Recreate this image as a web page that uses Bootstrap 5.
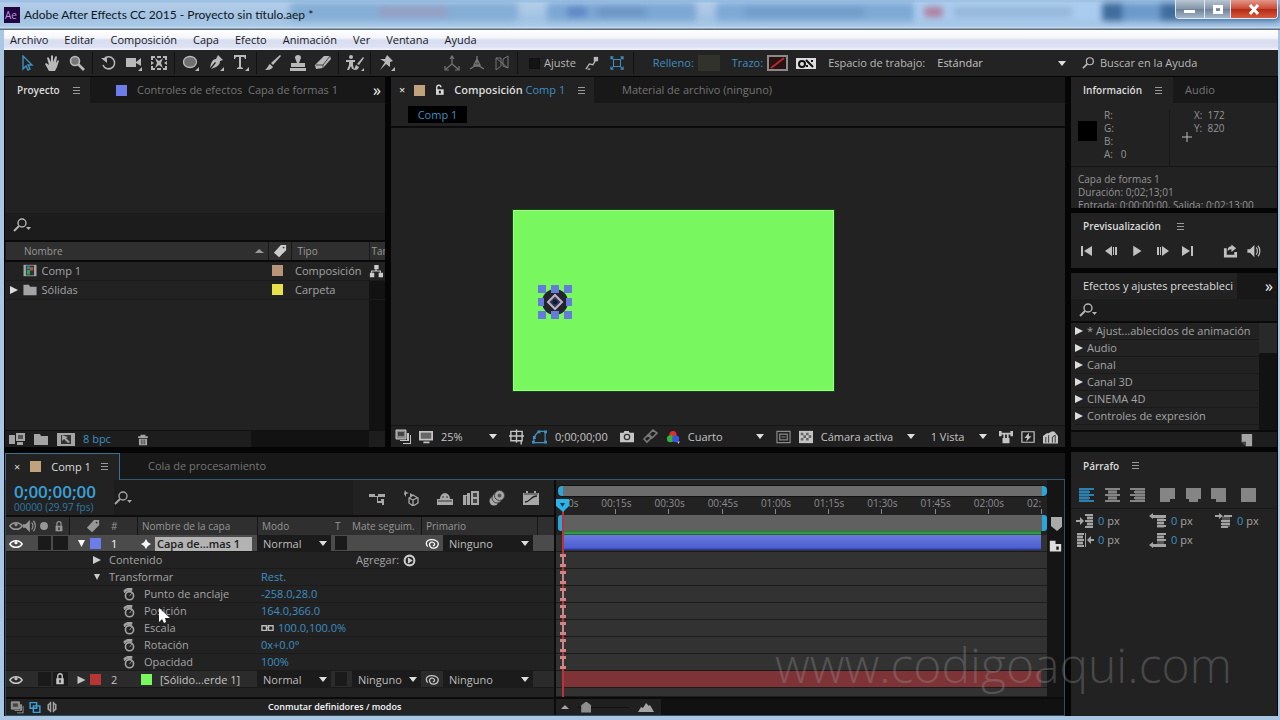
<!DOCTYPE html>
<html lang="es">
<head>
<meta charset="utf-8">
<meta name="viewport" content="width=device-width, initial-scale=1">
<title>Adobe After Effects CC 2015 - Proyecto sin título.aep *</title>
<link href="https://cdn.jsdelivr.net/npm/bootstrap@5.3.0/dist/css/bootstrap.min.css" rel="stylesheet">
<script src="https://cdn.jsdelivr.net/npm/bootstrap@5.3.0/dist/js/bootstrap.bundle.min.js"></script>
<style>
:root{--panel:#222223;--dark:#181818;--txt:#a4a4a4;--hi:#dcdcdc;--blue:#3f8fc0;--gap:6px}
*{min-width:0}
body{font-family:"Open Sans","Noto Sans",sans-serif;font-size:11px;line-height:14px;color:var(--txt);background:#a9c6e3;overflow:hidden}
button,select,input{font:inherit;color:inherit;background:none;border:0;padding:0;border-radius:0}
svg{display:block;width:16px;height:16px;fill:currentColor;flex:none}
a{color:var(--blue);text-decoration:none}
.window{min-height:100vh;padding:0 2px 4px 4px}
.titlebar{height:30px;color:#101820;font-family:Lato,sans-serif;font-size:12px;position:relative;overflow:hidden;margin:0 -2px 0 -4px;padding-left:4px;background:linear-gradient(#9cc1e4 0 2px,#b4cde8 3px,#a2c2e3 18px,#a9c9e8 26px,#c8dcf0 28px,#5d6d7c 29px)}
.glass{position:absolute;inset:3px 0 9px 290px;filter:blur(3px);overflow:visible}
.glass span{position:absolute;border-radius:3px;top:0;bottom:0}
.glass .blot{top:4px;bottom:4px;opacity:.5}
.title-text{position:relative}
.caps{position:absolute;right:2px;top:0;height:19px;border:1px solid #dfe9f3;border-top:0;border-radius:0 0 4px 4px;overflow:hidden}
.caps button{color:#fff;background:linear-gradient(#b9c6d3,#8496a9 48%,#6f8298 52%,#a4b8cb);border-right:1px solid #dfe9f3}
.caps .shut{background:linear-gradient(#e0978a,#cc4b35 48%,#b32b17 52%,#d8593c);border:0}
.menubar{height:20px;background:linear-gradient(#fff,#f4f5fb 40%,#d9ddf0 50%,#dde1f4 85%,#f4f6fb);font-size:11px;padding-left:6px;gap:16px}
.menubar a{color:#15181c}
.toolbar{height:26px;background:#232323;padding-left:10px;color:#b9b9b9}
.toolbar>button,.tools3>button{width:25px;display:flex;justify-content:center}
.split{width:1px;height:22px;margin:0 3px;background:#111}
.work{background:#050505;gap:var(--gap);padding:1px 1px 0 1px}
.pane{background:var(--panel);position:relative}
.col-side{width:206px;gap:5px}
.tabs-row{height:26px;background:var(--dark);flex:none;color:#757575;font-size:11px}
.tab-on{background:var(--panel);color:var(--hi);height:100%;font-weight:600;font-size:10px}
.burger{width:7px;height:7px;border:solid #999;border-width:1px 0;background:linear-gradient(#999,#999) 0 2px/7px 1px no-repeat}
.sw{width:11px;height:11px;flex:none;display:block}
.find{height:24px;background:#1c1c1c;border-bottom:2px solid #0a0a0a;color:#b4b4b4}
.find.tall{height:29px;padding-bottom:4px}
.find input{outline:0;flex:1}
.assets{width:100%;table-layout:fixed;font-size:11px}
.assets th{height:19px;background:#2f2f2f;font-weight:400;font-size:10px;color:#999;border-left:1px solid #191919;padding:0 0 0 6px;overflow:hidden;white-space:nowrap}
.assets th:last-child{padding-left:2px}
.assets thead{border-bottom:2px solid #0a0a0a}
.assets td{height:19px;padding:0;border-bottom:1px solid #1b1b1b;white-space:nowrap}
.gutter{position:absolute;right:0;top:38px;bottom:0;width:16px;background:#121212}
.foot{height:17px;background:#1d1d1d;border-top:1px solid #111;flex:none}
.crumb{height:25px;border-bottom:2px solid #0b0b0b;padding-left:17px}
.crumb a{background:#000;width:59px;height:17px;text-align:center;line-height:17px}
.canvas-green{width:321px;height:181px;margin:82px 0 0 122px;background:#78f75e;border:1px solid #a2f78e;outline:1px solid #134a10}
.pick{width:36px;height:36px;left:23px;top:73px}
select{appearance:none;background:url("data:image/svg+xml,%3Csvg xmlns='http://www.w3.org/2000/svg' viewBox='0 0 8 5'%3E%3Cpath fill='%23ddd' d='M0 0h8L4 5z'/%3E%3C/svg%3E") right 4px center/8px 5px no-repeat;color:#c4c4c4;outline:0}
.viewbar{height:22px;background:#202020;border-top:1px solid #151515;flex:none;color:#c4c4c4}
.info{font-size:10px;line-height:13px;color:#959595}
.fx-list{font-size:11px;line-height:16px}
.fx-list li{height:17px;border-bottom:1px solid #1a1a1a;white-space:nowrap}
.fx-list svg{width:8px;height:8px;color:#ddd}
.para svg{width:18px;height:16px}
.tl{height:263px;flex:none;font-size:11px}
.tl .tabs-row{position:relative;height:27px;border-bottom:1px solid #39566b;box-shadow:inset 0 -1px #101c25}
.tl .tab-on{height:27px;width:115px;gap:10px;border:1px solid #39708f;border-bottom:0;font-weight:400;font-size:11px}
.tl-body{border:1px solid #2d4e63;border-top:0}
.tl-left{width:550px;border-right:2px solid #0b0b0b}
.tl-top{height:35px}
.tcode{font-size:17px;line-height:18px;font-weight:600;color:#3aa0d8}
.fps{font-size:10px;line-height:12px;color:#2c7aa5}
.lrow{display:grid;grid-template-columns:16px 15px 15px 17px 17px 17px 34px 120px 74px 17px 73px 22px 90px 1fr;height:17px;align-items:center;white-space:nowrap;line-height:16px}
.lrow>*{height:100%;display:flex;align-items:center}
.lhead{background:#2f2f2f;border-top:2px solid #0d0d0d;height:20px;font-size:10px;color:#969696}
.lhead svg,.lrow svg{width:14px;height:14px}
.eyes{padding-left:3px}
.bar-l{border-left:1px solid #161616}
.lrow select{background-color:#1b1b1b;padding-left:6px;color:#bdbdbd}
.layer{background:#2b2b2b;box-shadow:inset 0 -1px #191919}
.layer.on{background:#4b4b4b}
.hole{background:#1a1a1a;margin:1px 1px 2px 1px;height:14px!important}
.chip{background:#b3b3b3;color:#202020;font-weight:600;height:14px;line-height:14px;width:97px;padding-left:2px}
.prop{height:17px;border-bottom:1px solid #1b1b1b;line-height:16px;white-space:nowrap}
.prop svg{width:13px;height:13px}
.prop .lab{width:255px;padding-left:117px}
.prop .lab.up{padding-left:87px}
.tl-foot{height:18px;border-top:2px solid #0b0b0b;flex:none}
.workbar{height:10px;margin:6px 0 0 2px;background:#6c6c6c;border:solid #29a6dc;border-width:0 5px;border-radius:4px;box-shadow:0 0 0 1px #111}
.ruler{height:19px;padding-left:6px;padding-right:2px;overflow:hidden;font-size:10px;line-height:13px;color:#8d8d8d}
.ruler span{flex:1;position:relative}
.ruler b{font-weight:400;display:block;margin-left:-14px;padding-top:1px}
.ruler span::after{content:"";position:absolute;left:0;bottom:1px;width:1px;height:5px;background:#888}
.ruler .last{flex:0 0 4px}
.band{height:16px;background:#606060;border:solid #29a6dc;border-width:0 5px;margin-left:2px;border-radius:3px}
.cache{height:4px;background:linear-gradient(#1b7a2c,#3aa84c 60%,#1d3b22);margin:0 6px}
.track{height:17px;background:#323232;border-bottom:1px solid #1c1c1c;padding:0 6px}
.track.t1>div{height:15px;background:linear-gradient(#6a7ae0,#4c5fd0 85%,#26308a)}
.track.t2>div{height:16px;background:#7e3436}
.head-line{left:6px;top:26px;bottom:0;width:2px;background:#b8343a}
.head-knob{left:0;top:19px;width:13px;height:13px;color:#29b5ec}
.keys{left:2px;top:72px;color:#cf8583}
.keys svg{width:10px;height:17px}
.side{width:17px;background:#151515;color:#aaa}
.mark-www{position:absolute;right:48px;bottom:28px;font-family:"Open Sans",sans-serif;font-weight:300;font-size:48px;line-height:54px;color:rgba(150,150,150,.34);pointer-events:none}
input[type=range]{appearance:none;width:52px;height:12px;outline:0;background:linear-gradient(#111,#111) 0 50%/100% 1px no-repeat}
input[type=range]::-webkit-slider-thumb{appearance:none;width:10px;height:11px;background:#8e8e8e;clip-path:polygon(50% 0,100% 35%,100% 100%,0 100%,0 35%)}
input[type=checkbox]{appearance:none;width:11px;height:11px;background:#141414;border:1px solid #101010}
</style>
</head>
<body>
<svg class="d-none" aria-hidden="true">
<symbol id="arrow" viewBox="0 0 16 16"><path d="M4 1v13l3-3 2 4 2-1-2-4h4z" fill="none" stroke="currentColor" stroke-width="1.4"/></symbol>
<symbol id="hand" viewBox="0 0 16 16"><path d="M5 16 1 9l1-1 3 2-2-7 1-1 1 1 2 4V1l1-1 1 1v6l2-5 1-1 1 1-1 6 2-3 1 1-2 6-2 4z"/></symbol>
<symbol id="zoom" viewBox="0 0 16 16"><circle cx="6" cy="6" r="4.5" fill="#777" stroke="currentColor" stroke-width="1.6"/><path d="m9 9 6 6" stroke="currentColor" stroke-width="2.6"/></symbol>
<symbol id="rot" viewBox="0 0 16 16"><path d="M3 4a6 6 0 1 1-1 6" fill="none" stroke="currentColor" stroke-width="1.5"/><path d="M0 3h6v5z"/></symbol>
<symbol id="cam" viewBox="0 0 16 16"><path d="M0 3h10v9H0zM10 7l5-4v8l-5-3zM16 12v4h-4z"/></symbol>
<symbol id="pan" viewBox="0 0 16 16"><path d="M0 1h4v2H2v2H0zm6 0h4v2H6zm6 0h4v4h-2V3h-2zM0 11h2v2h2v2H0zm6 2h4v2H6zm8-2h2v4h-4v-2h2zM0 6l3 2-3 2zm16 0v4l-3-2z"/><path d="m4 3 4 3 4-3-2 5 2 5-4-3-4 3 2-5z" fill="currentColor"/></symbol>
<symbol id="ell" viewBox="0 0 16 16"><ellipse cx="7" cy="7" rx="6.500" ry="5.500" fill="#707070" stroke="currentColor" stroke-width="1.3"/><path d="M16 12v4h-4z"/></symbol>
<symbol id="pen" viewBox="0 0 16 16"><path d="m10 0 5 5-3 1c0 4-3 6-9 8l5-6-1-1-5 6c1-6 3-9 6-9zM16 12v4h-4z"/></symbol>
<symbol id="type" viewBox="0 0 16 16"><path d="M1 0h12v4h-1l-1-2H8v10l2 1v1H4v-1l2-1V2H3L2 4H1zM16 12v4h-4z"/></symbol>
<symbol id="brush" viewBox="0 0 16 16"><path d="m15 0 1 1-8 9-2-2zM5 9l3 3c-2 3-5 3-8 3 3-2 3-5 5-6z"/></symbol>
<symbol id="stamp" viewBox="0 0 16 16"><path d="M5 3a3 3 0 0 1 6 0L9 8h6v4H1V8h6zM0 13h16v3H0z"/></symbol>
<symbol id="eraser" viewBox="0 0 16 16"><path d="m9 1 6 0 1 3-8 9-7 1-1-4z"/><path d="m1 10 7 0 7-9M8 10v3" fill="none" stroke="#444"/></symbol>
<symbol id="roto" viewBox="0 0 18 16"><circle cx="5" cy="2" r="2"/><path d="M0 5h9v2H7v3l1 4H6l-1-3-2 4H1l2-5V7H0zM17 2l1 1-5 7-2-1zM10 10l3 2c-1 3-3 3-6 3 2-1 2-4 3-5zM18 13v3h-3z"/></symbol>
<symbol id="pin" viewBox="0 0 16 16"><path d="m8 0 6 6-3 1v5L7 9l-6 6 5-8-5-3h5zM16 12v4h-4z"/></symbol>
<symbol id="axis" viewBox="0 0 16 16"><path d="M8 2v7l-6 5M8 9l6 5M6 4l2-3 2 3M1 11v4h4M11 15h4v-4" fill="none" stroke="currentColor" stroke-width="1.2"/></symbol>
<symbol id="axis2" viewBox="0 0 16 16"><path d="M8 1v8M1 14l5-3h4l5 3M5 10l3-6 3 6z" fill="none" stroke="currentColor" stroke-width="1.3"/></symbol>
<symbol id="axis3" viewBox="0 0 16 16"><path d="M2 3h5v8l-5 4zM9 4l5-3v12l-5-2zM2 3l12 10" fill="none" stroke="currentColor"/></symbol>
<symbol id="snap" viewBox="0 0 16 16"><path d="m1 15 4-6 4 1 3-5M3 15h3" fill="none" stroke="currentColor" stroke-width="1.5"/><path d="M10 1h5v5h-5z"/></symbol>
<symbol id="bounds" viewBox="0 0 16 16"><path d="M4 4h8v8H4zM1 1l3 3m8 8 3 3m0-14-3 3m-8 8-3 3M1 4V1h3m8 0h3v3m0 8v3h-3m-8 0H1v-3" fill="none" stroke="currentColor" stroke-width="1.2"/></symbol>
<symbol id="find" viewBox="0 0 16 16"><circle cx="9" cy="6" r="4" fill="none" stroke="currentColor" stroke-width="1.4"/><path d="m6 9-5 5" stroke="currentColor" stroke-width="2"/></symbol>
<symbol id="find2" viewBox="0 0 20 16"><circle cx="9" cy="6" r="4" fill="none" stroke="currentColor" stroke-width="1.4"/><path d="m6 9-5 5" stroke="currentColor" stroke-width="2"/><path d="M13 10h5l-2.500 3z"/></symbol>
<symbol id="lock" viewBox="0 0 16 16"><path d="M3 7h10v8H3z"/><path d="M5 8V4a3 3 0 0 1 6 0v4" fill="none" stroke="currentColor" stroke-width="1.800"/><path d="M7 9h2v4H7z" fill="#222"/></symbol>
<symbol id="unlock" viewBox="0 0 16 16"><path d="M3 7h11v8H3z"/><path d="M4 8V4a3 3 0 0 1 6 0" fill="none" stroke="currentColor" stroke-width="2"/><path d="M7 9h3v4H7z" fill="#222"/></symbol>
<symbol id="eye" viewBox="0 0 16 16"><path d="M1 8c3-5 11-5 14 0-3 5-11 5-14 0z" fill="none" stroke="currentColor" stroke-width="1.700"/><circle cx="8" cy="6.500" r="1.800"/></symbol>
<symbol id="spk" viewBox="0 0 16 16"><path d="M1 6h3l5-5v14l-5-5H1z"/><path d="M11 4c2 2 2 6 0 8m2-10c3 3 3 9 0 12" fill="none" stroke="currentColor" stroke-width="1.300"/></symbol>
<symbol id="dot" viewBox="0 0 16 16"><circle cx="8" cy="8" r="4.500"/></symbol>
<symbol id="tag" viewBox="0 0 16 16"><path d="m9 1 6 0 0 6-8 8-6-5zm3 2a1 1 0 1 0 .1 2 1 1 0 0 0 0-2z"/></symbol>
<symbol id="r" viewBox="0 0 8 8"><path d="M0 0v8l8-4z"/></symbol>
<symbol id="d" viewBox="0 0 8 8"><path d="M0 0h8L4 8z"/></symbol>
<symbol id="folder" viewBox="0 0 16 16"><path d="M1 3h6l1 2h7v9H1z"/></symbol>
<symbol id="net" viewBox="0 0 16 16"><path d="M6 1h5v5H6zM1 10h5v5H1zm10 0h5v5h-5z"/><path d="M8 5v3M3 10V8h10v2" fill="none" stroke="currentColor" stroke-width="1.300"/></symbol>
<symbol id="compi" viewBox="0 0 16 16"><path d="M0 1h16v14H0z"/><path d="M3 2h10v12H3z" fill="#25343a"/><path d="M4 7h4v6H4z" fill="#3ba050"/><path d="M8 4h4v4H8z" fill="#c55030"/><path d="M4 3h4v3H4z" fill="#3b88b0"/></symbol>
<symbol id="stack" viewBox="0 0 16 16"><path d="M0 4h6v9H0zm7-2h9v8H7zm1 9h6v3H8z"/><path d="M9 4h5v4H9z" fill="#555"/></symbol>
<symbol id="film" viewBox="0 0 18 16"><path d="M0 2h18v13H0z"/><path d="M4 4h10v9H4z" fill="#333"/><path d="m5 4 6 2-2 1 4 4-2 1-4-4-2 2z"/></symbol>
<symbol id="trash" viewBox="0 0 16 16"><path d="M2 4h12v2H2zm3-2h6v2H5zM3 7h10v8H3z"/><path d="M6 8v6m2-6v6m2-6v6" stroke="#444"/></symbol>
<symbol id="screen" viewBox="0 0 16 16"><path d="M0 1h16v11H0zm5 12h7v2H5z"/><path d="M2 3h12v7H2z" fill="#666"/></symbol>
<symbol id="copies" viewBox="0 0 16 16"><path d="M1 1h10v9H1z" fill="#888" stroke="currentColor"/><path d="M12 4h2v8H5v-1h7zM15 6h1v9H8v-1h7z"/><path d="M3 3h6v4H3z" fill="#444"/></symbol>
<symbol id="gridi" viewBox="0 0 16 16"><path d="M2 2h12v10H2zM8 0v14M0 7h16M13 12v4" fill="none" stroke="currentColor" stroke-width="1.500"/></symbol>
<symbol id="mask" viewBox="0 0 16 16"><path d="M2 14V8l5-6h7v12z" fill="none" stroke="currentColor" stroke-width="1.300"/><path d="M0 12h3v3H0zm13 0h3v3h-3zm0-11h3v3h-3zM1 7h3v3H1zm5-6h3v3H6z"/></symbol>
<symbol id="photo" viewBox="0 0 16 16"><path d="M0 3h4l1-2h5l1 2h5v11H0z"/><circle cx="8" cy="8" r="3" fill="#ccc" stroke="#333" stroke-width="1.500"/></symbol>
<symbol id="link" viewBox="0 0 16 16"><path d="M2 10l4-4 3 3-4 4zM7 5l4-4 4 3-5 5z" fill="none" stroke="currentColor" stroke-width="1.600"/></symbol>
<symbol id="rgb" viewBox="0 0 16 16"><circle cx="8" cy="5" r="4" fill="#e03025"/><circle cx="5" cy="10" r="4" fill="#35b23a"/><circle cx="11" cy="10" r="4" fill="#3a55dd"/><path d="M13 13h3l-2 3z"/></symbol>
<symbol id="roi" viewBox="0 0 16 16"><path d="M1 2h14v12H1zM4 5h8v6H4zM6 8h4" fill="none" stroke="currentColor" stroke-width="1.300"/></symbol>
<symbol id="check" viewBox="0 0 16 16"><path d="M0 1h16v14H0z"/><path d="M2 3h3v3H2zm6 0h3v3H8zM5 6h3v3H5zm6 0h3v3h-3zM2 9h3v3H2zm6 0h3v3H8z" fill="#666"/></symbol>
<symbol id="pix" viewBox="0 0 16 16"><path d="M0 1h3v2h10V1h3v6h-3V5H3v2H0zM4 9h8v6H4zM5 5h2v4H5zm4 0h2v4H9z"/></symbol>
<symbol id="fast" viewBox="0 0 16 16"><path d="M1 2h14v12H1z" fill="none" stroke="currentColor" stroke-width="1.400"/><path d="m9 3-5 6h3l-1 4 6-6H9z"/></symbol>
<symbol id="house" viewBox="0 0 16 16"><path d="M0 15V7l4-3h2l3-2h3l4 5v8z"/><path d="M3 14V8m3 6V6m4 8V8l3-2v8" stroke="#333" fill="none"/></symbol>
<symbol id="flow" viewBox="0 0 16 16"><path d="M0 4h6v2h3V4h7v3H9v4h3V9h3v6h-2v-2H8V7H0z"/></symbol>
<symbol id="draft" viewBox="0 0 16 16"><path d="m2 0 1 2 3 1-3 1 0 3-2-3zM7 3l3 2-3 2z"/><path d="m10 5 5 3v5l-5 3-4-3V8zm0 5v5m0-5 4-2m-4 2L6 8" fill="none" stroke="currentColor" stroke-width="1.300"/></symbol>
<symbol id="shy" viewBox="0 0 16 16"><path d="M0 9h3a5 6 0 1 1 10 0h3v6H0z"/><path d="M1 11h14M5 7h2m2 0h2" stroke="#333"/></symbol>
<symbol id="blend" viewBox="0 0 16 16"><path d="M0 5h4v10H0zM4 3h3v12H4zm4-2h8v14H8z"/><path d="M10 3h4v4h-4zm0 6h4v4h-4zM3 6h1v9H3z" fill="#444"/></symbol>
<symbol id="blur" viewBox="0 0 16 16"><circle cx="5" cy="11" r="4.500"/><circle cx="8" cy="8" r="5" stroke="#444"/><circle cx="10.500" cy="5.500" r="5" stroke="#444"/><circle cx="10.500" cy="5.500" r="2" fill="#555"/></symbol>
<symbol id="graph" viewBox="0 0 16 16"><path d="M0 3h3V1h2v2h6V1h2v2h3v12H0z"/><path d="M2 12c6 0 5-6 12-6" fill="none" stroke="#222" stroke-width="1.300"/><path d="M1 4h14" stroke="#333"/></symbol>
<symbol id="star" viewBox="0 0 16 16"><path d="m8 0 3 5 5 3-5 3-3 5-3-5-5-3 5-3z"/></symbol>
<symbol id="watch" viewBox="0 0 16 16"><circle cx="8" cy="9.500" r="5" fill="none" stroke="currentColor" stroke-width="2"/><path d="M5 0h6v3H5zM1 3l3-2 1 2-3 3zM8 10l3-4" stroke="currentColor"/></symbol>
<symbol id="whip" viewBox="0 0 16 16"><path d="M3 11C0 7 2 3 7 3s9 2 8 6-7 5-9 2 0-6 3-5 2 4 0 4" fill="none" stroke="currentColor" stroke-width="1.500"/></symbol>
<symbol id="play-c" viewBox="0 0 16 16"><circle cx="8" cy="8" r="6" fill="none" stroke="currentColor" stroke-width="2.500"/><path d="M6 4v8l6-4z"/></symbol>
<symbol id="ibeam" viewBox="0 0 10 17"><path d="M2 2h6v3H6v7h2v3H2v-3h2V5H2z"/></symbol>
<symbol id="first" viewBox="0 0 16 16"><path d="M2 3h2v10H2zM13 3v10L5 8z"/></symbol>
<symbol id="prev" viewBox="0 0 16 16"><path d="M9 3v10L2 8zM10 4h1v8h-1zm2 0h2v8h-2z"/></symbol>
<symbol id="play" viewBox="0 0 16 16"><path d="M3 1v14l11-7z"/></symbol>
<symbol id="loop" viewBox="0 0 16 16"><path d="M1 5h3v7h8V9h3v6H1zM5 8c0-4 2-5 4-5V1l5 4-5 4V6C7 6 6 7 5 8z"/></symbol>
<symbol id="al" viewBox="0 0 18 16"><path d="M1 1h10v14H1z" opacity=".6"/><path d="M1 1h15v2H1zm0 3h11v2H1zm0 3h15v2H1zm0 3h11v2H1zm0 3h15v2H1z"/></symbol>
<symbol id="ac" viewBox="0 0 18 16"><path d="M4 1h9v14H4z" opacity=".6"/><path d="M1 1h15v2H1zm3 3h9v2H4zM1 7h15v2H1zm3 3h9v2H4zm-3 3h15v2H1z"/></symbol>
<symbol id="ar" viewBox="0 0 18 16"><path d="M6 1h10v14H6z" opacity=".6"/><path d="M1 1h15v2H1zm4 3h11v2H5zM1 7h15v2H1zm4 3h11v2H5zm-4 3h15v2H1z"/></symbol>
<symbol id="jl" viewBox="0 0 18 16"><path d="M1 1h15v11H1zm0 11h10v3H1z"/></symbol>
<symbol id="jc" viewBox="0 0 18 16"><path d="M1 1h15v11H1zm3 11h9v3H4z"/></symbol>
<symbol id="jr" viewBox="0 0 18 16"><path d="M1 1h15v11H1zm5 11h10v3H6z"/></symbol>
<symbol id="jf" viewBox="0 0 18 16"><path d="M1 1h15v14H1z"/></symbol>
<symbol id="in1" viewBox="0 0 18 16"><path d="M11 1h6v14h-6z" opacity=".4"/><path d="M0 7h4V4l4 4-4 4V9H0zM9 1h8v2H9zm2 3h6v2h-6zM9 7h8v2H9zm2 3h6v2h-6zm-2 3h8v2H9z"/></symbol>
<symbol id="in2" viewBox="0 0 18 16"><path d="M1 1h6v14H1z" opacity=".4"/><path d="M1 1h7v2H1zm0 3h6v2H1zm0 3h7v2H1zm0 3h6v2H1zm0 3h7v2H1zM9 1h1v14H9zm9 6h-3V4l-4 4 4 4V9h3z"/></symbol>
<symbol id="in3" viewBox="0 0 18 16"><path d="M8 3h7v12H8z" opacity=".4"/><path d="M0 3l4-3v2h13v3H4v1zM8 6h9v2H8zm0 3h7v2H8zm0 3h9v2H8z"/></symbol>
<symbol id="in4" viewBox="0 0 18 16"><path d="M8 1h7v12H8z" opacity=".4"/><path d="M8 1h9v2H8zm0 3h7v2H8zm0 3h9v2H8zM0 13l4-3v2h13v3H4v1z"/></symbol>
<symbol id="in5" viewBox="0 0 18 16"><path d="M7 3h8v11H7z" opacity=".4"/><path d="M0 2h4V0l4 3-4 3V4H0zm9 0h8v2H9zM6 7h9v2H6zm0 3h9v2H6zm0 3h7v2H6z"/></symbol>
<symbol id="hill" viewBox="0 0 16 10"><path d="m0 10 3-5 2 1 3-5 3 3 1-1 4 7z"/></symbol>
<symbol id="new" viewBox="0 0 16 16"><path d="M3 1h12v14H8l-5-5z"/><path d="M2 10h6v5z" fill="#444"/></symbol>
<symbol id="circles" viewBox="0 0 16 16"><path d="M2 2h8v7H2zM6 6h8v8H6z" fill="none" stroke="currentColor" stroke-width="1.800"/></symbol>
<symbol id="brackets" viewBox="0 0 16 16"><path d="M6 1v14M10 1v14M6 3 3 5v6l3 2m4-10 3 2v6l-3 2" fill="none" stroke="currentColor" stroke-width="2"/></symbol>
</svg>

<div class="window d-flex flex-column">
  <header class="titlebar d-flex align-items-center gap-1">
    <div class="glass" aria-hidden="true">
      <span style="left:0;width:23%;background:#84aed6"></span><span class="blot" style="left:9%;width:7%;background:#a890b0"></span>
      <span style="left:26%;width:15%;background:#7ca7d4"></span><span class="blot" style="left:28%;width:2%;background:#3f69b8"></span><span class="blot" style="left:31%;width:5%;background:#5b86b4"></span>
      <span style="left:43%;width:20%;background:#7da9d5"></span><span class="blot" style="left:46%;width:12%;background:#668fbd"></span><span style="left:63%;width:19%;background:#a9ccef"></span>
      <span class="blot" style="left:64%;width:2%;background:#b5304c"></span><span class="blot" style="left:67%;width:12%;background:#7f9fc4"></span><span style="left:82%;width:18%;background:#3f6c9d"></span><span style="left:84%;width:4%;background:#6b9acb"></span>
    </div>
    <svg class="title-text" viewBox="0 0 16 16"><rect width="16" height="16" fill="#21063f"/><text x="1" y="12" font-size="10" fill="#b79be0" font-family="Open Sans">Ae</text></svg>
    <span class="title-text">Adobe After Effects CC 2015 - Proyecto sin título.aep *</span>
    <div class="caps d-flex">
      <button style="width:29px" aria-label="Minimizar"><svg class="mx-auto"><path d="M2 9h11v3H2z"/></svg></button>
      <button style="width:26px" aria-label="Restaurar"><svg class="mx-auto"><path d="M3 4h10v9H3zm3 3v3h4V7z" fill-rule="evenodd"/></svg></button>
      <button class="shut" style="width:46px" aria-label="Cerrar"><svg class="mx-auto" viewBox="0 0 16 16"><path d="m4 4 8 9m0-9-8 9" stroke="#fff" stroke-width="3"/></svg></button>
    </div>
  </header>
  <nav class="menubar d-flex align-items-center">
    <a href="#">Archivo</a><a href="#">Editar</a><a href="#">Composición</a><a href="#">Capa</a><a href="#">Efecto</a><a href="#">Animación</a><a href="#">Ver</a><a href="#">Ventana</a><a href="#">Ayuda</a>
  </nav>
  <div class="toolbar d-flex align-items-center text-nowrap">
    <button aria-label="Selección" style="color:#3f8fc0"><svg><use href="#arrow"/></svg></button><button aria-label="Mano"><svg><use href="#hand"/></svg></button><button aria-label="Zoom"><svg><use href="#zoom"/></svg></button><i class="split"></i>
    <button aria-label="Rotar"><svg><use href="#rot"/></svg></button><button aria-label="Cámara"><svg><use href="#cam"/></svg></button><button aria-label="Panorámica"><svg><use href="#pan"/></svg></button><i class="split"></i>
    <button aria-label="Elipse"><svg><use href="#ell"/></svg></button><button aria-label="Pluma"><svg><use href="#pen"/></svg></button><button aria-label="Texto"><svg><use href="#type"/></svg></button><i class="split"></i>
    <button aria-label="Pincel"><svg><use href="#brush"/></svg></button><button aria-label="Tampón"><svg><use href="#stamp"/></svg></button><button aria-label="Borrador"><svg><use href="#eraser"/></svg></button><i class="split"></i>
    <button aria-label="Pincel de rotoscopia"><svg style="width:20px"><use href="#roto"/></svg></button><i class="split"></i><button aria-label="Posición libre"><svg><use href="#pin"/></svg></button>
    <div class="tools3 d-flex ms-4 ps-3" style="color:#777"><button aria-label="Eje local"><svg><use href="#axis"/></svg></button><button aria-label="Eje mundial"><svg><use href="#axis2"/></svg></button><button aria-label="Eje de vista"><svg><use href="#axis3"/></svg></button></div>
    <i class="split"></i>
    <label class="d-flex align-items-center gap-1 ms-2"><input type="checkbox">Ajuste</label>
    <button class="ms-1" aria-label="Ajustar a bordes"><svg style="width:14px;height:14px"><use href="#snap"/></svg></button><button aria-label="Ajustar a límites" style="color:#3f8fc0"><svg style="width:14px;height:14px"><use href="#bounds"/></svg></button><i class="split"></i>
    <a href="#" class="ms-3">Relleno:</a><span class="ms-1" style="width:22px;height:16px;background:#31322a"></span>
    <a href="#" class="ms-2 ps-1">Trazo:</a><svg class="ms-1" style="width:21px" viewBox="0 0 21 16"><path d="M1 1h19v14H1z" fill="#2a1112" stroke="#8a8a8a" stroke-width="2"/><path d="M4 13 17 3" stroke="#b02c35" stroke-width="2"/></svg>
    <svg class="ms-2" style="width:20px" viewBox="0 0 20 16"><path d="M0 3h20v11H0z" fill="#ddd"/><circle cx="6" cy="9" r="3" fill="none" stroke="#111" stroke-width="2"/><path d="m10 5 7 7M15 6h2M10 11h2" stroke="#111" stroke-width="2"/></svg>
    <label class="ms-2 ps-1" for="ws">Espacio de trabajo:</label>
    <select id="ws" class="ms-1 ps-2 flex-grow-1"><option>Estándar</option></select>
    <div class="d-flex align-items-center ps-2" style="width:208px"><svg style="width:14px;height:14px" class="mx-1"><use href="#find"/></svg><input class="flex-grow-1" value="Buscar en la Ayuda" aria-label="Buscar en la Ayuda"></div>
  </div>

  <main class="work d-flex flex-grow-1">
    <div class="d-flex flex-column flex-grow-1" style="gap:6px">
      <div class="d-flex flex-grow-1" style="gap:6px">
        <section class="pane d-flex flex-column" style="width:380px;flex:none">
          <div class="tabs-row d-flex align-items-center">
            <div class="tab-on d-flex align-items-center gap-3 ps-2" style="width:85px"><span class="ps-1">Proyecto</span><i class="burger" style="margin-left:-3px"></i></div>
            <i class="sw" style="background:#6c7ce8;margin:0 10px 0 26px"></i><span>Controles de efectos&nbsp; Capa de formas 1</span><b class="ms-auto me-1 fs-6 text-light fw-normal">»</b>
          </div>
          <div style="height:110px"></div>
          <div class="find tall d-flex align-items-center ps-2"><svg style="width:20px"><use href="#find2"/></svg><input aria-label="Buscar en el proyecto"></div>
          <div class="position-relative flex-grow-1">
            <div class="gutter"></div>
            <table class="assets position-relative">
              <colgroup><col><col style="width:23px"><col style="width:78px"><col style="width:16px"></colgroup>
              <thead><tr><th><div class="d-flex align-items-center ps-2"><span class="ps-1">Nombre</span><svg class="ms-auto me-1" style="width:9px;height:4px" viewBox="0 0 9 4"><path d="M0 4h9L4 0z"/></svg></div></th><th class="ps-1" aria-label="Etiqueta"><svg style="width:14px;height:14px;color:#ccc"><use href="#tag"/></svg></th><th>Tipo</th><th>Tamaño</th></tr></thead>
              <tbody>
                <tr><td><div class="d-flex align-items-center gap-1 ps-3"><svg style="height:13px"><use href="#compi"/></svg>Comp 1</div></td><td class="ps-1"><i class="sw" style="background:#b89478"></i></td><td class="ps-1">Composición</td><td><svg style="width:14px;color:#ccc"><use href="#net"/></svg></td></tr>
                <tr><td><div class="d-flex align-items-center gap-1 ps-1"><svg style="width:8px;height:8px;color:#ddd"><use href="#r"/></svg><svg style="height:15px"><use href="#folder"/></svg>Sólidas</div></td><td class="ps-1"><i class="sw" style="background:#e8e04a"></i></td><td class="ps-1">Carpeta</td><td></td></tr>
              </tbody>
            </table>
          </div>
          <div class="foot d-flex align-items-center gap-2 ps-1">
            <svg><use href="#stack"/></svg><svg><use href="#folder"/></svg><svg style="width:18px"><use href="#film"/></svg><a href="#">8 bpc</a><svg class="ms-3" style="height:13px"><use href="#trash"/></svg>
            <i class="ms-auto h-100" style="width:118px;background:#121212;margin-right:16px"></i>
          </div>
        </section>
        <section class="pane d-flex flex-column flex-grow-1">
          <div class="tabs-row d-flex align-items-center">
            <div class="tab-on d-flex align-items-center ps-2" style="width:203px;gap:9px;font-size:11px"><span>×</span><i class="sw" style="background:#c0a27c"></i><svg style="width:11px;height:12px"><use href="#unlock"/></svg><span>Composición <a href="#" class="fw-normal">Comp 1</a></span><i class="burger ms-1"></i></div>
            <span class="ms-4 ps-1">Material de archivo (ninguno)</span>
          </div>
          <div class="crumb d-flex align-items-center"><a href="#">Comp 1</a></div>
          <div class="flex-grow-1">
            <div class="canvas-green position-relative">
              <svg class="pick position-absolute" viewBox="0 0 36 36"><circle cx="18" cy="18" r="13" fill="#23242e"/><path d="m18 11 7 7-7 7-7-7z" fill="#333a58" stroke="#bdb3c4" stroke-width="2"/><circle cx="18" cy="18" r="2.500" fill="#111a40"/><path fill="#647bdb" d="M1 1h8v8H1zm13 0h8v8h-8zm13 0h8v8h-8zM1 14h6v8H1zm28 0h6v8h-6zM1 27h8v8H1zm13 0h8v8h-8zm13 0h8v8h-8z"/></svg>
            </div>
          </div>
          <div class="viewbar d-flex align-items-center gap-2 ps-1 text-nowrap">
            <svg><use href="#copies"/></svg><svg style="width:14px"><use href="#screen"/></svg>
            <select aria-label="Ampliación" style="width:60px"><option>25%</option></select>
            <svg style="width:15px"><use href="#gridi"/></svg><svg style="width:15px;color:#3f8fc0"><use href="#mask"/></svg><span>0;00;00;00</span>
            <svg class="ms-1" style="width:14px"><use href="#photo"/></svg><svg style="color:#777"><use href="#link"/></svg><svg style="width:14px"><use href="#rgb"/></svg>
            <select aria-label="Resolución" style="width:80px"><option>Cuarto</option></select>
            <svg style="width:15px;color:#888"><use href="#roi"/></svg><svg style="width:14px"><use href="#check"/></svg>
            <select aria-label="Vista 3D" style="width:98px"><option>Cámara activa</option></select>
            <select aria-label="Vistas" class="ms-1" style="width:60px"><option>1 Vista</option></select>
            <svg style="width:14px"><use href="#pix"/></svg><svg style="width:14px"><use href="#fast"/></svg><svg style="width:15px"><use href="#house"/></svg>
          </div>
        </section>
      </div>
      <section class="pane tl d-flex flex-column">
        <div class="tabs-row d-flex align-items-center">
          <div class="tab-on d-flex align-items-center ps-2"><span>×</span><i class="sw" style="background:#c0a27c"></i><span>Comp 1</span><i class="burger"></i></div>
          <span class="ms-4 ps-1">Cola de procesamiento</span>
        </div>
        <div class="tl-body d-flex flex-grow-1">
          <div class="tl-left d-flex flex-column flex-shrink-0">
            <div class="tl-top d-flex align-items-center">
              <div class="ps-2" style="width:108px"><div class="tcode">0;00;00;00</div><div class="fps">00000 (29.97 fps)</div></div>
              <label class="d-flex align-items-center h-100" style="width:240px;background:#1d1d1d"><svg style="width:20px"><use href="#find2"/></svg><input class="flex-grow-1" aria-label="Buscar capas"></label>
              <div class="d-flex flex-grow-1 ps-3 pe-3" style="color:#a8a8a8;gap:18px"><svg><use href="#flow"/></svg><svg><use href="#draft"/></svg><svg><use href="#shy"/></svg><svg style="margin-left:-8px"><use href="#blend"/></svg><svg style="margin-left:-8px"><use href="#blur"/></svg><svg><use href="#graph"/></svg></div>
            </div>
            <div class="lrow lhead"><span class="eyes"><svg><use href="#eye"/></svg></span><span><svg><use href="#spk"/></svg></span><span><svg><use href="#dot"/></svg></span><span><svg style="height:11px"><use href="#lock"/></svg></span><span class="bar-l"></span><span><svg><use href="#tag"/></svg></span><span class="ps-2">#</span><span class="bar-l ps-1">Nombre de la capa</span><span class="bar-l ps-1">Modo</span><span class="ps-1">T</span><span class="ps-1">Mate seguim.</span><span class="bar-l ps-1 text-nowrap">Primario</span><span></span><span class="bar-l ms-1"></span></div>
            <div class="lrow layer on text-light"><span class="eyes"><svg><use href="#eye"/></svg></span><span></span><span class="hole"></span><span class="hole"></span><span class="ps-1 ms-1"><svg style="width:9px;height:7px"><use href="#d"/></svg></span><span class="ps-1"><i class="sw" style="background:#6c7ce8"></i></span><span class="ps-2">1</span><span class="gap-1 ps-1"><svg style="width:10px;height:10px"><use href="#star"/></svg><b class="chip">Capa de...mas 1</b></span><select aria-label="Modo 1"><option>Normal</option></select><span class="hole ms-1"></span><span></span><span class="ps-1"><svg><use href="#whip"/></svg></span><select aria-label="Primario 1"><option>Ninguno</option></select><span></span></div>
            <div class="prop d-flex align-items-center"><div class="lab up d-flex align-items-center gap-2"><svg style="width:8px;height:8px;color:#ccc"><use href="#r"/></svg><span>Contenido</span></div><span style="width:95px"></span><span>Agregar:</span><svg class="ms-1" style="color:#ccc"><use href="#play-c"/></svg></div>
            <div class="prop d-flex align-items-center"><div class="lab up d-flex align-items-center gap-2"><svg style="width:8px;height:6px;color:#ccc"><use href="#d"/></svg><span>Transformar</span></div><a href="#">Rest.</a></div>
            <div class="prop d-flex align-items-center"><div class="lab d-flex align-items-center gap-2"><svg><use href="#watch"/></svg><span>Punto de anclaje</span></div><a href="#">-258.0,28.0</a></div>
            <div class="prop d-flex align-items-center"><div class="lab d-flex align-items-center gap-2"><svg><use href="#watch"/></svg><span class="position-relative">Posición<svg class="position-absolute" style="left:14px;top:5px;width:13px;height:16px;color:#fff" viewBox="0 0 13 16"><path d="M1 0v14l3-3 2 4 2-1-1-4h5z"/></svg></span></div><a href="#">164.0,366.0</a></div>
            <div class="prop d-flex align-items-center"><div class="lab d-flex align-items-center gap-2"><svg><use href="#watch"/></svg><span>Escala</span></div><svg viewBox="0 0 14 14" class="me-1"><path d="M1 4h5v5H1zm7 0h5v5H8zM5 6h4" fill="none" stroke="#bbb" stroke-width="1.500"/></svg><a href="#">100.0,100.0%</a></div>
            <div class="prop d-flex align-items-center"><div class="lab d-flex align-items-center gap-2"><svg><use href="#watch"/></svg><span>Rotación</span></div><a href="#">0x+0.0°</a></div>
            <div class="prop d-flex align-items-center"><div class="lab d-flex align-items-center gap-2"><svg><use href="#watch"/></svg><span>Opacidad</span></div><a href="#">100%</a></div>
            <div class="lrow layer" style="color:#c4c4c4"><span class="eyes"><svg><use href="#eye"/></svg></span><span></span><span class="hole"></span><span class="hole"><svg style="height:12px"><use href="#lock"/></svg></span><span class="ps-1 ms-1"><svg style="width:9px;height:8px"><use href="#r"/></svg></span><span class="ps-1"><i class="sw" style="background:#b93434"></i></span><span class="ps-2">2</span><span class="gap-2 ps-1"><i class="sw" style="background:#78f75e"></i>[Sólido...erde 1]</span><select aria-label="Modo 2"><option>Normal</option></select><span class="hole ms-1"></span><select aria-label="Mate 2" class="ms-1"><option>Ninguno</option></select><span class="ps-1"><svg><use href="#whip"/></svg></span><select aria-label="Primario 2"><option>Ninguno</option></select><span></span></div>
            <div class="flex-grow-1"></div>
            <div class="tl-foot d-flex align-items-center gap-1 ps-1"><svg style="width:14px;height:13px"><use href="#copies"/></svg><svg style="width:14px;height:13px;color:#3f9fd8"><use href="#circles"/></svg><svg style="width:12px;height:12px"><use href="#brackets"/></svg><button class="text-light fw-semibold" style="margin-left:206px;font-size:9px">Conmutar definidores / modos</button></div>
          </div>
          <div class="flex-grow-1 d-flex flex-column">
            <div class="d-flex flex-grow-1">
              <div class="position-relative flex-grow-1 d-flex flex-column">
                <div class="workbar flex-shrink-0"></div>
                <div class="ruler d-flex flex-shrink-0"><span><b style="margin-left:6px">0s</b></span><span><b>00:15s</b></span><span><b>00:30s</b></span><span><b>00:45s</b></span><span><b>01:00s</b></span><span><b>01:15s</b></span><span><b>01:30s</b></span><span><b>01:45s</b></span><span><b>02:00s</b></span><span class="last"><b>02:</b></span></div>
                <div class="band flex-shrink-0"></div><div class="cache flex-shrink-0"></div>
                <div class="track t1"><div></div></div><div class="track"></div><div class="track"></div><div class="track"></div><div class="track"></div><div class="track"></div><div class="track"></div><div class="track"></div><div class="track t2"><div></div></div><div class="track flex-grow-1" style="height:auto"></div>
                <i class="head-line position-absolute"></i>
                <svg class="head-knob position-absolute" viewBox="0 0 13 13"><path d="M0 0h13v7l-6 6-7-6z"/><path d="M4 4h5L6.500 8z" fill="#134"/></svg>
                <div class="keys position-absolute"><svg><use href="#ibeam"/></svg><svg><use href="#ibeam"/></svg><svg><use href="#ibeam"/></svg><svg><use href="#ibeam"/></svg><svg><use href="#ibeam"/></svg><svg><use href="#ibeam"/></svg><svg><use href="#ibeam"/></svg></div>
              </div>
              <div class="side d-flex flex-column align-items-center gap-2"><div style="height:28px"></div><svg style="width:13px"><path d="M2 1h12v9l-6 5-6-5z"/></svg><svg style="width:15px;height:13px;color:#ddd" viewBox="0 0 16 16"><path d="M1 1h7v4h7v9H9v-2h3V8H9v6H1z"/></svg></div>
            </div>
            <div class="tl-foot d-flex align-items-center ps-1" style="background:#111"><div class="d-flex align-items-center gap-2 h-100" style="background:#202020;margin-left:-4px;padding-left:5px;width:105px"><svg style="width:8px;height:4px" viewBox="0 0 8 4"><path d="m0 4 4-4 4 4z"/></svg><input type="range" value="10" aria-label="Zoom de la línea de tiempo"><svg style="width:18px;height:10px"><use href="#hill"/></svg></div></div>
          </div>
        </div>
      </section>
    </div>

    <aside class="col-side d-flex flex-column flex-shrink-0">
      <section class="pane d-flex flex-column overflow-hidden" style="height:131px">
        <div class="tabs-row d-flex align-items-center"><div class="tab-on d-flex align-items-center gap-3 ps-2" style="width:102px"><span class="ps-1">Información</span><i class="burger" style="margin-left:-3px"></i></div><span class="ms-2 ps-1">Audio</span></div>
        <div class="info d-flex" style="padding:6px 0 0 7px;height:64px;flex:none;border-bottom:1px solid #151515">
          <i style="width:19px;height:20px;background:#000;margin:12px 7px 0 0"></i><div style="width:66px;border-right:1px solid #191919">R:<br>G:<br>B:<br>A: &nbsp; 0</div>
          <svg style="width:10px;height:10px;margin:23px 2px 0 12px" viewBox="0 0 10 10"><path d="M5 0v10M0 5h10" stroke="#bbb" stroke-width="1"/></svg><div>X: &nbsp;172<br>Y: &nbsp;820</div>
        </div>
        <div class="info text-nowrap" style="padding:6px 0 0 7px;letter-spacing:0">Capa de formas 1<br>Duración: 0;02;13;01<br>Entrada: 0;00;00;00, Salida: 0;02;13;00</div>
      </section>
      <section class="pane" style="height:55px">
        <div class="tab-on d-flex align-items-center gap-3 ps-2" style="height:26px"><span class="ps-1">Previsualización</span><i class="burger"></i></div>
        <div class="d-flex align-items-center gap-2 ps-2 pt-1" style="color:#c0c0c0"><svg><use href="#first"/></svg><svg><use href="#prev"/></svg><svg class="mx-1" style="width:12px;height:14px"><use href="#play"/></svg><svg style="transform:scaleX(-1)"><use href="#prev"/></svg><svg style="transform:scaleX(-1)"><use href="#first"/></svg><svg style="margin-left:20px;width:15px"><use href="#loop"/></svg><svg style="width:15px;height:14px"><use href="#spk"/></svg></div>
      </section>
      <section class="pane d-flex flex-column flex-grow-1">
        <div class="tabs-row d-flex align-items-center"><div class="tab-on d-flex align-items-center overflow-hidden text-nowrap fw-normal ps-2" style="width:166px;font-size:11px"><span class="ps-1">Efectos y ajustes preestableci</span></div><b class="ms-auto me-1 fs-6 text-light fw-normal">»</b></div>
        <div class="find d-flex align-items-center ps-2"><svg style="width:20px"><use href="#find2"/></svg><input aria-label="Buscar efectos"></div>
        <div class="d-flex flex-grow-1 overflow-hidden" style="flex-basis:0">
          <ul class="fx-list list-unstyled mb-0 flex-grow-1 ps-1">
            <li class="d-flex align-items-center gap-1"><svg><use href="#r"/></svg>* Ajust...ablecidos de animación</li><li class="d-flex align-items-center gap-1"><svg><use href="#r"/></svg>Audio</li><li class="d-flex align-items-center gap-1"><svg><use href="#r"/></svg>Canal</li><li class="d-flex align-items-center gap-1"><svg><use href="#r"/></svg>Canal 3D</li><li class="d-flex align-items-center gap-1"><svg><use href="#r"/></svg>CINEMA 4D</li><li class="d-flex align-items-center gap-1"><svg><use href="#r"/></svg>Controles de expresión</li>
          </ul>
          <div style="width:18px;background:#121212"><div style="height:30px;background:#292929"></div></div>
        </div>
        <div class="foot d-flex align-items-center justify-content-end" style="border-top:2px solid #0a0a0a;padding-right:24px"><svg style="width:14px;height:14px"><use href="#new"/></svg></div>
      </section>
      <section class="pane para" style="height:264px">
        <div class="tab-on d-flex align-items-center gap-3 ps-2" style="height:27px"><span class="ps-1">Párrafo</span><i class="burger" style="margin-left:-3px"></i></div>
        <div class="d-flex justify-content-between" style="padding:8px 19px 5px 7px;color:#858585"><svg style="color:#2f7fae"><use href="#al"/></svg><svg><use href="#ac"/></svg><svg><use href="#ar"/></svg><svg class="ms-1"><use href="#jl"/></svg><svg><use href="#jc"/></svg><svg><use href="#jr"/></svg><svg class="ms-1"><use href="#jf"/></svg></div>
        <div class="d-flex flex-wrap pt-1" style="padding-left:5px;row-gap:3px;border-top:1px solid #1a1a1a">
          <label class="d-flex align-items-center gap-1" style="width:73px"><svg><use href="#in1"/></svg><span><a href="#">0</a> px</span></label><label class="d-flex align-items-center gap-1" style="width:66px"><svg><use href="#in3"/></svg><span><a href="#">0</a> px</span></label><label class="d-flex align-items-center gap-1"><svg><use href="#in5"/></svg><span><a href="#">0</a> px</span></label>
          <label class="d-flex align-items-center gap-1" style="width:73px"><svg><use href="#in2"/></svg><span><a href="#">0</a> px</span></label><label class="d-flex align-items-center gap-1"><svg><use href="#in4"/></svg><span><a href="#">0</a> px</span></label>
        </div>
      </section>
    </aside>
  </main>
</div>
<div class="mark-www">www.codigoaqui.com</div>
</body>
</html>
